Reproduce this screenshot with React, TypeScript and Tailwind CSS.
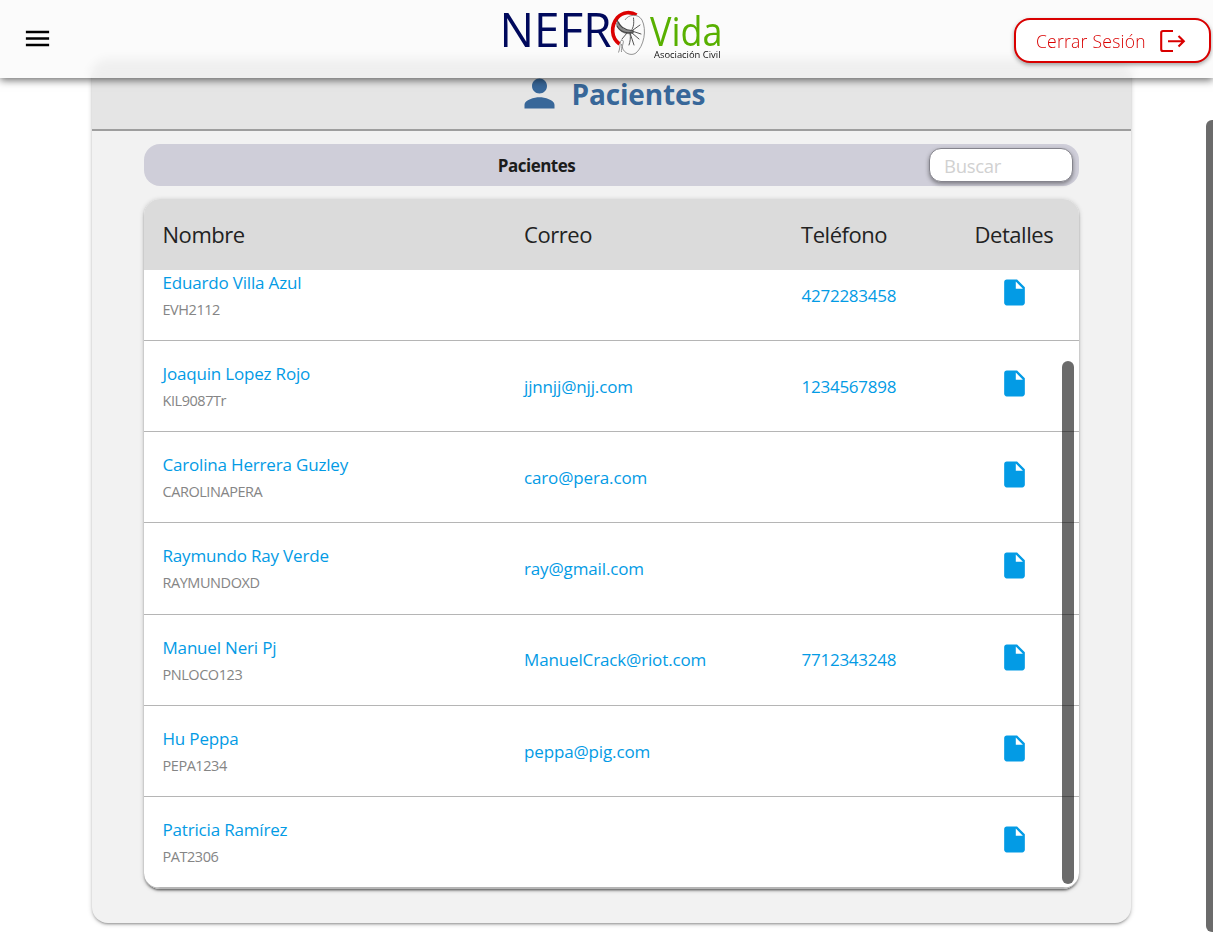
import { MdInsertDriveFile, MdMenu, MdPerson } from "react-icons/md";

type Patient = { name: string; code: string; email?: string; phone?: string };

const patients: Patient[] = [
  { name: "Eduardo Villa Azul", code: "EVH2112", phone: "4272283458" },
  { name: "Joaquin Lopez Rojo", code: "KIL9087Tr", email: "jjnnjj@njj.com", phone: "1234567898" },
  { name: "Carolina Herrera Guzley", code: "CAROLINAPERA", email: "caro@pera.com" },
  { name: "Raymundo Ray Verde", code: "RAYMUNDOXD", email: "ray@gmail.com" },
  { name: "Manuel Neri Pj", code: "PNLOCO123", email: "ManuelCrack@riot.com", phone: "7712343248" },
  { name: "Hu Peppa", code: "PEPA1234", email: "peppa@pig.com" },
  { name: "Patricia Ramírez", code: "PAT2306" },
];

function Logo() {
  return (
    <svg width="222" height="70" viewBox="500 0 222 70" className="block overflow-visible" fontFamily="'Open Sans', sans-serif">
      <text x="499.5" y="47" fontSize="47" fill="#00095c" textLength="112" lengthAdjust="spacingAndGlyphs">NEFR</text>
      <path d="M636.5 15 C631 11.5 623 11.5 617.5 17.5 C610.5 26 611 38 619.5 44" fill="none" stroke="#dc0000" strokeWidth="3.6" />
      <path d="M625 20 C628 14.5 638 13 642 20 C647 30 644 46 636 53 C631 56.5 624 53 622.5 48 C622 44 625 41 622 40 C619 41 621 46 618.5 52.5 M621.5 44 C622.5 48 621 50 621.5 52" fill="#fafafa" stroke="#777" strokeWidth=".8" />
      <g fill="none" strokeLinecap="round">
        <path d="M618 24 C619.5 29 624 33 632 32" strokeWidth="4" stroke="#8a8a8a" />
        <path d="M617 20 C620 27 625 31 633 30.5 M617 26 C620 32 627 34 633 32" strokeWidth="1.1" stroke="#444" />
        <path d="M631 31 C634 27 634 23 633.5 18 M633 30 L640 25 M632 31 L641 34 M632 33 L639 39 M630 33 L634 45 M630 33 C631 38 630 42 629 45 M627 33 L622 39" strokeWidth="1" stroke="#555" />
      </g>
      <text x="650" y="46" fontSize="39.5" fill="#58b000" textLength="72.5" lengthAdjust="spacingAndGlyphs">Vida</text>
      <text x="654" y="58" fontSize="9.8" fill="#111" textLength="66.5" lengthAdjust="spacingAndGlyphs">Asociación Civil</text>
    </svg>
  );
}

function ExitIcon() {
  return (
    <svg width="28" height="24" viewBox="0 0 28 24" fill="none" stroke="#d90000" strokeWidth="2.1">
      <path d="M15 2H5Q3.2 2 3.2 3.8V20.2Q3.2 22 5 22H15" />
      <path d="M10 12.2H26M20.5 7L25.8 12.2L20.5 17.4" />
    </svg>
  );
}

function Row({ name, code, email, phone }: Patient) {
  return (
    <div className="grid h-[91.17px] shrink-0 grid-cols-[361.5px_277px_173px_1fr] items-center border-b border-[#b5b5b5] pl-[18.5px] text-[17px] text-[#039be5]">
      <div className="pt-[2px]">
        <div className="h-[27px] leading-[27px] tracking-[-0.18px]">{name}</div>
        <div className="h-[27px] text-[14.5px] leading-[27px] tracking-[-0.45px] text-[#858585]">{code}</div>
      </div>
      <div className="pt-px tracking-[-0.14px]">{email}</div>
      <div className="pt-px pl-[0.5px] tracking-[-0.25px]">{phone}</div>
      <MdInsertDriveFile className="mb-[5px] ml-[24.5px] size-[31px]" />
    </div>
  );
}

export default function App() {
  return (
    <div className="relative h-[932px] overflow-hidden bg-white font-['Open_Sans',sans-serif] text-[#222]">
      <nav className="relative z-10 grid h-[78px] grid-cols-[1fr_222px_1fr] bg-[#f8f8f8]/55 shadow-[0_2px_8px_rgba(0,0,0,0.6)] backdrop-blur-[5px]">
        <div className="pt-[22.5px] pl-[22px]">
          <MdMenu className="size-[31px] text-black" />
        </div>
        <div className="ml-[4.5px]">
          <Logo />
        </div>
        <div className="flex justify-end pt-[18px] pr-[2px]">
          <button className="flex h-[45px] w-[197px] items-center rounded-[16px] border-2 border-[#d90000] bg-white pl-[20px] text-[17.5px] font-light text-[#d90000] shadow-[0_2px_4px_rgba(0,0,0,0.35)]">
            <span className="w-[122px] pt-px text-left tracking-[0.25px]">Cerrar Sesión</span>
            <ExitIcon />
          </button>
        </div>
      </nav>

      <main className="-mt-[18px] ml-[92px] h-[863px] w-[1039px] overflow-hidden rounded-[16px] bg-[#f2f2f2] shadow-[0_2px_2px_rgba(0,0,0,0.14),0_3px_1px_-2px_rgba(0,0,0,0.12),0_1px_5px_rgba(0,0,0,0.2)]">
        <header className="flex h-[71px] items-center border-b-2 border-[#9e9e9e] bg-[#e5e5e5] pb-[3px] pl-[425px] text-[#386799]">
          <MdPerson className="size-[45px]" />
          <h1 className="ml-[9.5px] pt-[2px] text-[28px] font-bold tracking-[-0.15px]">Pacientes</h1>
        </header>

        <div className="mx-[52px] mt-[13px] flex h-[42px] w-[935px] items-center rounded-[16px] bg-[#cfced9]">
          <h2 className="w-[785px] pt-[2px] text-center text-[17px] font-bold tracking-[-0.5px] text-[#1c1c1c]">Pacientes</h2>
          <input
            placeholder="Buscar"
            className="h-[34px] w-[144px] rounded-[12px] border border-[#85848d] bg-white px-[14px] text-[18.5px] tracking-[-0.3px] shadow-[0_2px_4px_rgba(0,0,0,0.4)] placeholder:text-[#d1d1d1]"
          />
        </div>

        <section className="relative mx-[52px] mt-[13px] flex h-[690px] w-[935px] flex-col rounded-[16px] bg-white shadow-[0_2px_2px_rgba(0,0,0,0.3),0_3px_1px_-2px_rgba(0,0,0,0.2),0_1px_5px_rgba(0,0,0,0.2)]">
          <div className="grid h-[71px] shrink-0 grid-cols-[361.5px_277px_173px_1fr] items-center rounded-t-[16px] bg-[#dbdbdb] pb-px pl-[18.5px] text-[22px] tracking-[-0.45px]">
            <div>Nombre</div>
            <div>Correo</div>
            <div>Teléfono</div>
            <div className="pl-[0.5px]">Detalles</div>
          </div>
          <div className="flex h-[619px] flex-col justify-end overflow-hidden rounded-b-[16px] border-b border-[#b5b5b5]">
            {patients.map((p) => (
              <Row key={p.code} {...p} />
            ))}
          </div>
          <div className="absolute top-[162px] right-[5px] h-[523px] w-3 rounded-full bg-black/58" />
        </section>
      </main>

      <div className="absolute top-[120px] right-0 h-[812px] w-[7px] rounded-l-[6px] bg-[#6b6b6b]" />
    </div>
  );
}
